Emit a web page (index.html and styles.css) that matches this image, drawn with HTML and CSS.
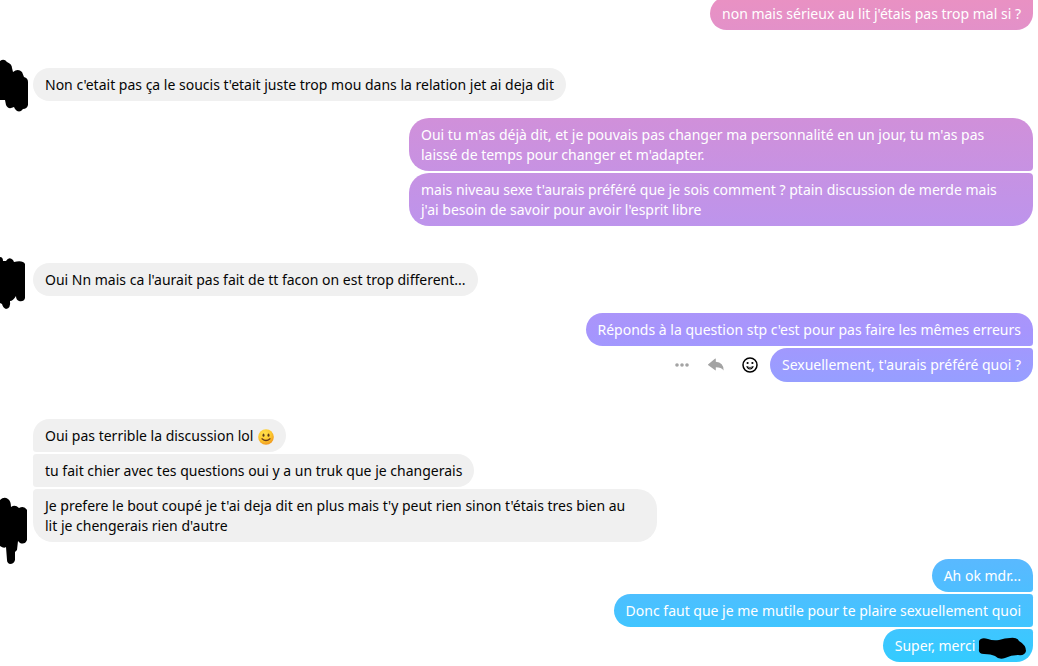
FILE: index.html
```
<!DOCTYPE html>

<html lang="fr">

<head>
  <meta charset="UTF-8">
  <meta name="viewport" content="width=device-width, initial-scale=1">

  <title>Discussion</title>

  <link rel="stylesheet" href="styles.css">
</head>

<body>
  <main class="thread">
    <div class="group sent continued">
      <div class="bubble">non mais sérieux au lit j'étais pas trop mal si ?</div>
    </div>

    <div class="group received">
      <div class="avatar">
        <svg viewBox="0 0 28 72" aria-hidden="true">
          <path d="M0 6Q4 3 7 7Q12 9 12 13L13 17Q18 13 22 17L24 22Q28 23 28 27V50Q27 54 23 54Q19 59 15 54L14 52Q8 55 6 50L5 45H0Z"/>
        </svg>
      </div>
      <div class="bubbles">
        <div class="bubble">Non c'etait pas ça le soucis t'etait juste trop mou dans la relation jet ai deja dit</div>
      </div>
    </div>

    <div class="group sent">
      <div class="bubble">Oui tu m'as déjà dit, et je pouvais pas changer ma personnalité en un jour, tu m'as pas laissé de temps pour changer et m'adapter.</div>
      <div class="bubble">mais niveau sexe t'aurais préféré que je sois comment ? ptain discussion de merde mais j'ai&nbsp;besoin de savoir pour avoir l'esprit libre</div>
    </div>

    <div class="group received">
      <div class="avatar">
        <svg viewBox="0 0 28 72" aria-hidden="true">
          <path d="M0 7Q3 7 3 11L6 11Q9 6 13 10L14 12Q23 10 25 14V48Q24 52 19 51Q16 50 16 46Q13 51 10 51Q11 58 6 59Q3 58 2 54L0 53Z"/>
        </svg>
      </div>
      <div class="bubbles">
        <div class="bubble">Oui Nn mais ca l'aurait pas fait de tt facon on est trop different...</div>
      </div>
    </div>

    <div class="group sent">
      <div class="bubble">Réponds à la question stp c'est pour pas faire les mêmes erreurs</div>
      <div class="row">
        <div class="actions">
          <button type="button" aria-label="Plus">
            <svg viewBox="0 0 16 16" fill="#a3a3a3">
              <circle cx="3" cy="8" r="1.8"/>
              <circle cx="8" cy="8" r="1.8"/>
              <circle cx="13" cy="8" r="1.8"/>
            </svg>
          </button>
          <button type="button" aria-label="Répondre">
            <svg viewBox="0 0 16 16" fill="#a3a3a3">
              <path d="M0 7.5L7.2 1.6Q7.8 1.3 7.8 2V4.8Q15.6 5.3 15.6 13.4Q13.4 10.2 7.8 10.2V13Q7.8 13.7 7.2 13.3L0 8Z"/>
            </svg>
          </button>
          <button type="button" aria-label="Réagir">
            <svg viewBox="0 0 16 16">
              <circle cx="8" cy="8" r="7" fill="none" stroke="#000" stroke-width="1.5"/>
              <circle cx="5.6" cy="6" r="1.1"/>
              <circle cx="10.4" cy="6" r="1.1"/>
              <path d="M4.2 9.3H5.2Q8 10.6 10.8 9.3H11.8Q10.9 12.4 8 12.4T4.2 9.3Z"/>
              <path d="M5.8 10.3Q8 11.1 10.2 10.3Q9.4 11.4 8 11.4T5.8 10.3Z" fill="#fff"/>
            </svg>
          </button>
        </div>
        <div class="bubble">Sexuellement, t'aurais préféré quoi ?</div>
      </div>
    </div>

    <div class="group received">
      <div class="avatar">
        <svg viewBox="0 0 28 72" aria-hidden="true">
          <path d="M0 4Q4 0 8 3Q11 5 11 11Q15 8 19 12Q24 9 27 14V44Q25 49 20 47L18 45L17 54L15 56V64Q14 68 10 68Q7 67 7 64L6 51Q4 53 0 50Z"/>
        </svg>
      </div>
      <div class="bubbles">
        <div class="bubble">Oui pas terrible la discussion lol <svg class="emoji" viewBox="0 0 16 16" role="img" aria-label="sourire">
          <defs>
            <radialGradient id="face" cx="40%" cy="30%" r="70%">
              <stop offset="0" stop-color="#ffe14f"/>
              <stop offset="0.6" stop-color="#fdc92e"/>
              <stop offset="1" stop-color="#f19a20"/>
            </radialGradient>
          </defs>
          <circle cx="8" cy="8" r="7.8" fill="url(#face)"/>
          <ellipse cx="5.5" cy="6.2" rx="1" ry="1.6" fill="#5b3a1a"/>
          <ellipse cx="10.5" cy="6.2" rx="1" ry="1.6" fill="#5b3a1a"/>
          <path d="M4 9.8Q8 13.2 12 9.8" fill="none" stroke="#6b3a18" stroke-width="1.3" stroke-linecap="round"/>
        </svg></div>
        <div class="bubble">tu fait chier avec tes questions oui y a un truk que je changerais</div>
        <div class="bubble">Je prefere le bout coupé je t'ai deja dit en plus mais t'y peut rien sinon t'étais tres bien au lit&nbsp;je chengerais rien d'autre</div>
      </div>
    </div>

    <div class="group sent">
      <div class="bubble">Ah ok mdr...</div>
      <div class="bubble">Donc faut que je me mutile pour te plaire sexuellement quoi</div>
      <div class="bubble">Super, merci <svg class="redacted" viewBox="0 0 42 22" aria-hidden="true">
        <path d="M0 5Q2 1 9 3Q14 5 20 4Q26 2 31 2Q38 1 40 5Q47 9 47 15Q46 20 39 19Q32 19 26 22Q20 24 16 20Q12 18 5 18Q-1 18 0 13Z"/>
      </svg></div>
    </div>
  </main>
</body>

</html>
```

FILE: styles.css
```
html {
  margin: 0;
  padding: 0;
}

body {
  margin: 0;
  overflow: hidden;
  background: #fff;
  color: #050505;
  font-family: "Noto Sans", sans-serif;
  font-size: 14px;
  line-height: 20px;
}

.thread {
  display: flex;
  flex-direction: column;
  gap: 17px;
  margin-top: -3px;
}

.group {
  display: flex;
}

.bubble {
  box-sizing: border-box;
  max-width: 624px;
  padding: 7px 12px 6px;
  border-radius: 20px;
}

.sent {
  flex-direction: column;
  align-items: flex-end;
  gap: 2px;
  padding-right: 5px;

  .bubble {
    color: #fff;
    background: linear-gradient(#e991c3, #d090da 18%, #bd94ec 34%, #a695fd 50%, #999dff 56%, #55bbff 86%, #32ccff) fixed;
  }

  >:not(:last-child) {
    border-bottom-right-radius: 4px;
  }

  >:not(:first-child),
  >.row .bubble {
    border-top-right-radius: 4px;
  }

  &.continued {
    padding-bottom: 1px;
  }

  &.continued .bubble {
    border-top-right-radius: 4px;
  }
}

.received {
  align-items: flex-end;
  padding-top: 20px;

  .bubble {
    background: #f0f0f0;
  }

  .bubble:not(:last-child) {
    border-bottom-left-radius: 4px;
  }

  .bubble:not(:first-child) {
    border-top-left-radius: 4px;
  }
}

.bubbles {
  display: flex;
  flex-direction: column;
  align-items: flex-start;
  gap: 2px;
}

.avatar {
  position: relative;
  flex: none;
  width: 28px;
  height: 28px;
  margin-right: 5px;

  svg {
    position: absolute;
    bottom: -26px;
    left: 0;
    width: 28px;
    height: 72px;
  }
}

.row {
  display: flex;
  min-height: 34px;
}

.actions {
  display: flex;
  align-items: center;
  gap: 18px;
  margin-right: 12px;

  button {
    padding: 0;
    border: none;
    background: none;
    cursor: pointer;
  }

  svg {
    display: block;
    width: 16px;
    height: 16px;
  }
}

.emoji {
  width: 16px;
  height: 16px;
  margin-left: 1px;
  vertical-align: -4px;
}

.redacted {
  width: 42px;
  height: 22px;
  margin: -2px 0;
  overflow: visible;
  vertical-align: middle;
}
```
